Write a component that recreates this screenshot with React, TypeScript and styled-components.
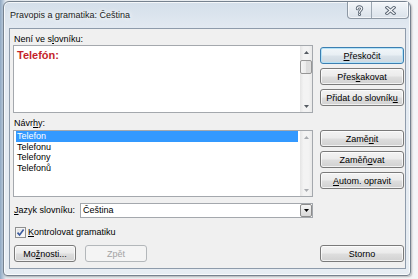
import React from "react";
import styled, { createGlobalStyle, css } from "styled-components";

const GlobalStyle = createGlobalStyle`
  html, body { margin: 0; padding: 0; }
  body {
    width: 418px;
    height: 279px;
    overflow: hidden;
    background: linear-gradient(90deg, #8fa8c2 0, #b7c8da 3px, #e6ebf0 6px, #eef1f4 60%, #f4f5f7 100%);
    font-family: "Liberation Sans", Arial, sans-serif;
    font-size: 9px;
    color: #000;
  }
`;

const Window = styled.div`
  box-sizing: border-box;
  width: 408px;
  height: 275px;
  margin: 1px 0 0 3px;
  border: 1px solid #76828f;
  border-radius: 6px 6px 4px 4px;
  background: linear-gradient(180deg, #d4dfea 0, #e2e9f1 26px, #e7edf3 100%);
  box-shadow: inset 0 0 0 1px rgba(255, 255, 255, 0.75), 1px 1px 2px rgba(0, 0, 0, 0.25);
  display: flex;
  flex-direction: column;
`;

const TitleBar = styled.div`
  flex: none;
  height: 26px;
  display: flex;
  align-items: flex-start;
  padding: 0 1px 0 6px;
`;

const Title = styled.div`
  flex: 1;
  padding-top: 7px;
  line-height: 12px;
  font-size: 9px;
  color: #1b1b1b;
  white-space: nowrap;
  text-shadow: 0 0 4px #fff, 0 0 7px #fff;
`;

const CaptionGroup = styled.div`
  display: flex;
  height: 16px;
  border: 1px solid #8d98a4;
  border-top: none;
  border-radius: 0 0 4px 4px;
  overflow: hidden;
  background: linear-gradient(180deg, #f3f6f9 0%, #e6ecf2 50%, #dae2ea 100%);
  box-shadow: inset 0 0 0 1px rgba(255, 255, 255, 0.6);
`;

const CaptionButton = styled.div<{ $w: number }>`
  width: ${(p) => p.$w}px;
  display: flex;
  align-items: center;
  justify-content: center;
  & + & {
    border-left: 1px solid #9ca7b2;
  }
`;

const Client = styled.div`
  flex: 1;
  margin: 0 4px 6px 5px;
  border: 1px solid #8e9bab;
  background: #f0f0f0;
  padding: 4px 1px 0 3px;
  display: flex;
  flex-direction: column;
`;

const Group = styled.div<{ $mt?: number }>`
  display: grid;
  grid-template-columns: 300px 84px;
  column-gap: 7px;
  margin-top: ${(p) => p.$mt ?? 0}px;
`;

const Column = styled.div`
  display: flex;
  flex-direction: column;
`;

const ButtonColumn = styled.div<{ $pt: number }>`
  display: flex;
  flex-direction: column;
  gap: 4px;
  padding-top: ${(p) => p.$pt}px;
`;

const FieldLabel = styled.div<{ $mb?: number }>`
  height: 12px;
  line-height: 12px;
  padding-left: 1px;
  margin-bottom: ${(p) => p.$mb ?? 0}px;
  white-space: nowrap;
`;

const Key = styled.span`
  text-decoration: underline;
  text-underline-offset: 1px;
`;

const Button = styled.button<{ $default?: boolean; $w?: number }>`
  box-sizing: border-box;
  height: 17px;
  width: ${(p) => p.$w ?? 84}px;
  margin: 0;
  padding: 0;
  font-family: inherit;
  font-size: 9px;
  color: #000;
  border: 1px solid #7a7a7a;
  border-radius: 3px;
  background: linear-gradient(180deg, #f3f3f3 0%, #ebebeb 48%, #dedede 52%, #d1d1d1 100%);
  box-shadow: inset 0 0 0 1px rgba(255, 255, 255, 0.7);
  display: flex;
  align-items: center;
  justify-content: center;
  white-space: nowrap;
  ${(p) =>
    p.$default &&
    css`
      border-color: #3c7fb1;
      box-shadow: inset 0 0 0 1px #b4e2f7;
      background: linear-gradient(180deg, #f1f6f9 0%, #e8eff4 48%, #dae3ea 52%, #cdd8e0 100%);
    `}
  &:disabled {
    border-color: #b3b7ba;
    background: #f4f4f4;
    color: #a3a3a3;
    box-shadow: none;
  }
`;

const Box = styled.div<{ $h: number }>`
  box-sizing: border-box;
  height: ${(p) => p.$h}px;
  border: 1px solid #a4a8ad;
  background: #fff;
  display: flex;
`;

const ErrorText = styled.div`
  flex: 1;
  padding: 3px 3px 0;
  font-size: 11px;
  line-height: 13px;
  font-weight: bold;
  color: #c41f2b;
`;

const VScroll = styled.div`
  flex: none;
  width: 12px;
  display: flex;
  flex-direction: column;
  background: linear-gradient(90deg, #e4e4e4 0%, #f3f3f3 30%, #f3f3f3 70%, #e9e9e9 100%);
`;

const ScrollArrow = styled.div`
  flex: none;
  height: 12px;
  display: flex;
  align-items: center;
  justify-content: center;
`;

const Thumb = styled.div`
  flex: none;
  box-sizing: border-box;
  height: 14px;
  margin-top: 2px;
  border: 1px solid #969696;
  border-radius: 2px;
  background: linear-gradient(90deg, #f4f4f4 0%, #ebebeb 50%, #dcdcdc 51%, #dfdfdf 100%);
`;

const Track = styled.div`
  flex: 1;
`;

const Items = styled.div`
  flex: 1;
  padding: 0 2px;
`;

const Item = styled.div<{ $selected?: boolean }>`
  height: 10.5px;
  line-height: 10.5px;
  padding-left: 1px;
  white-space: nowrap;
  ${(p) =>
    p.$selected &&
    css`
      background: #3399ff;
      color: #fff;
    `}
`;

const LangRow = styled.div`
  display: grid;
  grid-template-columns: 67px 233px;
  margin-top: 6px;
  align-items: center;
`;

const RowLabel = styled.div`
  padding-left: 1px;
  line-height: 15px;
  white-space: nowrap;
`;

const Combo = styled.div`
  box-sizing: border-box;
  height: 15px;
  border: 1px solid #a4a8ad;
  background: #fff;
  display: flex;
`;

const ComboText = styled.div`
  flex: 1;
  padding-left: 2px;
  line-height: 13px;
`;

const DropButton = styled.div`
  box-sizing: border-box;
  width: 12px;
  border: 1px solid #8c8c8c;
  border-radius: 2px;
  background: linear-gradient(180deg, #f5f5f5 0%, #e6e6e6 50%, #d8d8d8 100%);
  display: flex;
  align-items: center;
  justify-content: center;
`;

const CheckRow = styled.label`
  display: flex;
  align-items: center;
  height: 11px;
  margin-top: 9px;
  padding-left: 2px;
  gap: 2px;
  line-height: 11px;
  white-space: nowrap;
`;

const CheckBox = styled.span`
  box-sizing: border-box;
  width: 11px;
  height: 11px;
  border: 1px solid #8e8f8f;
  background: linear-gradient(135deg, #dcdcdc 0%, #f2f2f2 60%, #ffffff 100%);
  box-shadow: inset 0 0 0 1px #f4f4f4;
  display: flex;
  align-items: center;
  justify-content: center;
`;

const BottomRow = styled.div`
  display: flex;
  margin-top: 7px;
  padding-left: 1px;
  gap: 9px;
`;

const Spacer = styled.div`
  flex: 1;
`;

const Arrow = ({ dir, color }: { dir: "up" | "down"; color: string }) => (
  <svg width="5" height="3" viewBox="0 0 5 3">
    <polygon points={dir === "up" ? "0,3 2.5,0 5,3" : "0,0 5,0 2.5,3"} fill={color} />
  </svg>
);

const ScrollBar = ({ thumb, color }: { thumb: boolean; color: string }) => (
  <VScroll>
    <ScrollArrow>
      <Arrow dir="up" color={color} />
    </ScrollArrow>
    {thumb && <Thumb />}
    <Track />
    <ScrollArrow>
      <Arrow dir="down" color={color} />
    </ScrollArrow>
  </VScroll>
);

const HelpGlyph = () => (
  <svg width="9" height="11" viewBox="0 0 9 11">
    <path d="M2.3 3.8 C2.3 1.2 6.7 1.2 6.7 3.6 C6.7 5.3 4.5 5.4 4.5 7.2" fill="none" stroke="#5f6a77" strokeWidth="3" strokeLinecap="round" />
    <circle cx="4.5" cy="9.4" r="1.5" fill="#5f6a77" />
    <path d="M2.3 3.8 C2.3 1.2 6.7 1.2 6.7 3.6 C6.7 5.3 4.5 5.4 4.5 7.2" fill="none" stroke="#f7f9fb" strokeWidth="1.2" strokeLinecap="round" />
    <circle cx="4.5" cy="9.4" r="0.6" fill="#f7f9fb" />
  </svg>
);

const CloseGlyph = () => (
  <svg width="11" height="9" viewBox="0 0 11 9">
    <path d="M2 1.5 L9 7.5 M9 1.5 L2 7.5" stroke="#5f6a77" strokeWidth="3.2" strokeLinecap="square" />
    <path d="M2 1.5 L9 7.5 M9 1.5 L2 7.5" stroke="#f7f9fb" strokeWidth="1.3" strokeLinecap="square" />
  </svg>
);

const CheckMark = () => (
  <svg width="9" height="9" viewBox="0 0 9 9">
    <path d="M1.5 4.6 L3.6 6.9 L7.6 1.6" fill="none" stroke="#3a5a9e" strokeWidth="1.6" />
  </svg>
);

const suggestions = ["Telefon", "Telefonu", "Telefony", "Telefonů"];

export default function App() {
  return (
    <>
      <GlobalStyle />
      <Window>
        <TitleBar>
          <Title>Pravopis a gramatika: Čeština</Title>
          <CaptionGroup>
            <CaptionButton $w={23}>
              <HelpGlyph />
            </CaptionButton>
            <CaptionButton $w={36}>
              <CloseGlyph />
            </CaptionButton>
          </CaptionGroup>
        </TitleBar>
        <Client>
          <Group>
            <Column>
              <FieldLabel>
                Není ve s<Key>l</Key>ovníku:
              </FieldLabel>
              <Box $h={68}>
                <ErrorText>Telefón:</ErrorText>
                <ScrollBar thumb color="#555b62" />
              </Box>
            </Column>
            <ButtonColumn $pt={14}>
              <Button $default>
                <Key>P</Key>řeskočit
              </Button>
              <Button>
                Přes<Key>k</Key>akovat
              </Button>
              <Button>
                Přidat do slovník<Key>u</Key>
              </Button>
            </ButtonColumn>
          </Group>
          <Group $mt={4}>
            <Column>
              <FieldLabel $mb={1}>
                Návr<Key>h</Key>y:
              </FieldLabel>
              <Box $h={67}>
                <Items>
                  {suggestions.map((s, i) => (
                    <Item key={s} $selected={i === 0}>
                      {s}
                    </Item>
                  ))}
                </Items>
                <ScrollBar thumb={false} color="#a9acb0" />
              </Box>
            </Column>
            <ButtonColumn $pt={13}>
              <Button>
                Zamě<Key>n</Key>it
              </Button>
              <Button>
                Zaměň<Key>o</Key>vat
              </Button>
              <Button>
                <Key>A</Key>utom. opravit
              </Button>
            </ButtonColumn>
          </Group>
          <LangRow>
            <RowLabel>
              <Key>J</Key>azyk slovníku:
            </RowLabel>
            <Combo>
              <ComboText>Čeština</ComboText>
              <DropButton>
                <Arrow dir="down" color="#000" />
              </DropButton>
            </Combo>
          </LangRow>
          <CheckRow>
            <CheckBox>
              <CheckMark />
            </CheckBox>
            <span>
              <Key>K</Key>ontrolovat gramatiku
            </span>
          </CheckRow>
          <BottomRow>
            <Button $w={62}>
              Mo<Key>ž</Key>nosti...
            </Button>
            <Button $w={62} disabled>
              Zpět
            </Button>
            <Spacer />
            <Button $w={84}>Storno</Button>
          </BottomRow>
        </Client>
      </Window>
    </>
  );
}
